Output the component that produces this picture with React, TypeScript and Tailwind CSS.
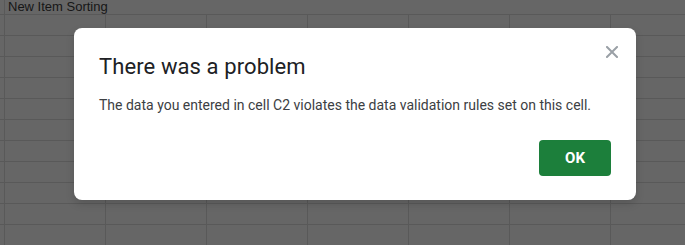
import React from "react";

const COLS = 7;
const ROWS = 11;

export default function App() {
  return (
    <div className="relative w-[685px] h-[245px] overflow-hidden bg-[#666666]" style={{ fontFamily: "Roboto, 'Liberation Sans', sans-serif" }}>
      {/* sheet grid (dimmed by overlay) */}
      <div className="grid grid-cols-[5px_repeat(7,101px)]">
        <div className="h-[15px] border-r border-b border-[#595959]" />
        <div className="col-span-7 h-[15px] border-b border-[#595959] pl-[3px] text-[13px] leading-[13px] text-[#161616] whitespace-nowrap" style={{ fontFamily: "'Liberation Sans', Arial, sans-serif" }}>
          New Item Sorting
        </div>
        {Array.from({ length: ROWS }).map((_, r) => (
          <React.Fragment key={r}>
            <div className="h-[21px] border-r border-b border-[#595959]" />
            {Array.from({ length: COLS }).map((_, c) => (
              <div key={c} className="h-[21px] border-r border-b border-[#595959]" />
            ))}
          </React.Fragment>
        ))}
      </div>

      {/* dialog */}
      <div className="absolute left-[74px] top-[28px] w-[562px] h-[172px] bg-white rounded-[8px] shadow-[0_4px_8px_rgba(0,0,0,0.15)] px-[25px] pt-[25px] pb-[24px] flex flex-col">
        <button className="absolute right-[17px] top-[17px] w-[14px] h-[14px] flex items-center justify-center">
          <svg width="12" height="12" viewBox="0 0 12 12">
            <path d="M1 1 L11 11 M11 1 L1 11" stroke="#9aa0a6" strokeWidth="2" strokeLinecap="square" />
          </svg>
        </button>
        <div className="text-[22px] leading-[28px] text-[#202124] tracking-[0.1px]">There was a problem</div>
        <div className="mt-[14px] text-[14px] leading-[20px] text-[#3c4043]">
          The data you entered in cell C2 violates the data validation rules set on this cell.
        </div>
        <div className="mt-auto flex justify-end">
          <button className="w-[72px] h-[36px] rounded-[4px] bg-[#1c7f3b] text-white text-[15px] font-bold">OK</button>
        </div>
      </div>
    </div>
  );
}
